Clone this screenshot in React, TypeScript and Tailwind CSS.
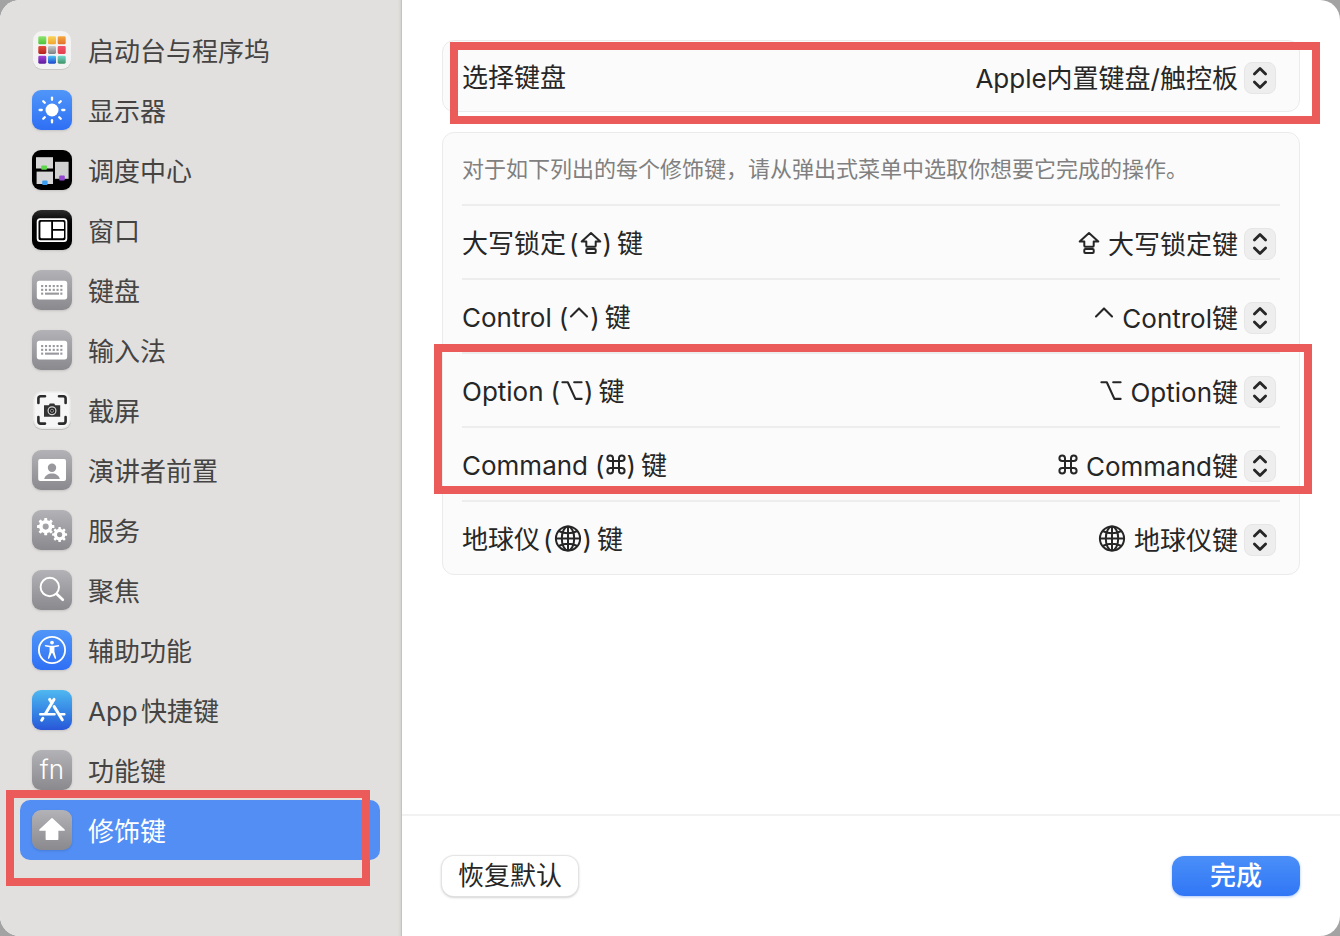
import { ReactNode, useId, useState } from "react";

const Launchpad = () => {
  const colors = [
    ["#8fe36e", "#4cc43a"],
    ["#fbd35a", "#f0a52e"],
    ["#f6a83f", "#e0702c"],
    ["#e8503f", "#b3231c"],
    ["#c9cccd", "#7d8183"],
    ["#f2516c", "#e3414f"],
    ["#a746d6", "#5b1a9c"],
    ["#4cc4f4", "#1f48cc"],
    ["#74d8cc", "#3f9468"]
  ];
  return (
    <svg viewBox="0 0 40 40" className="size-10">
      <defs>
        {colors.map(([from, to], i) => (
          <linearGradient key={i} id={`pad${i}`} x1="0" y1="0" x2="0" y2="1">
            <stop offset="0" stopColor={from} />
            <stop offset="1" stopColor={to} />
          </linearGradient>
        ))}
      </defs>
      <rect x="1" y="1.6" width="38" height="38.4" rx="9" fill="#c9c8c6" />
      <rect x="1" y="1" width="38" height="38" rx="9" fill="#f3f3f3" />
      {colors.map((_, i) => (
        <rect key={i} x={6.3 + (i % 3) * 9.7} y={6.3 + Math.floor(i / 3) * 9.7} width="8" height="8" rx="1.4" fill={`url(#pad${i})`} />
      ))}
    </svg>
  );
};

const Sun = () => (
  <svg viewBox="0 0 40 40" className="size-10" stroke="#fff" strokeWidth="2.3" strokeLinecap="round">
    <circle cx="20" cy="20" r="6.5" fill="#fff" stroke="none" />
    {[0, 45, 90, 135, 180, 225, 270, 315].map((a) => (
      <path key={a} d="M20 7.6v2.2" transform={`rotate(${a} 20 20)`} />
    ))}
  </svg>
);

const MissionControl = () => (
  <svg viewBox="0 0 40 40" className="size-10">
    <rect x="4" y="7.2" width="17" height="11.3" fill="#d6d6d6" />
    <rect x="4.6" y="21.6" width="16.4" height="12.4" fill="#d6d6d6" />
    <rect x="23" y="11.8" width="13.6" height="17" fill="#d0d0d0" />
    <rect x="9.2" y="15.4" width="5.8" height="4.4" rx="1" fill="#5fd74c" />
    <rect x="10.2" y="30.4" width="5.4" height="4.6" rx="1" fill="#3a9df2" />
    <rect x="27.2" y="25.4" width="5.6" height="5" rx="1" fill="#9448cf" />
  </svg>
);

const Windows = () => (
  <svg viewBox="0 0 40 40" className="size-10" fill="#fff">
    <rect x="5.6" y="9.2" width="28.8" height="22" rx="2.6" fill="none" stroke="#fff" strokeWidth="1.8" />
    <path d="M9.6 11.7h9.6v16.6H9.6a1.2 1.2 0 0 1-1.2-1.2V12.9a1.2 1.2 0 0 1 1.2-1.2ZM21 11.7h9.8a1.2 1.2 0 0 1 1.2 1.2V19H21ZM21 20.8h11v6.3a1.2 1.2 0 0 1-1.2 1.2H21Z" />
  </svg>
);

const Keyboard = () => (
  <svg viewBox="0 0 40 40" className="size-10" fill="#98989d">
    <rect x="4.8" y="10.8" width="30.4" height="18.6" rx="2.6" fill="#fff" />
    {[10, 13.9, 17.7, 21.6, 25.4, 29.2].map((x) => (
      <g key={x}>
        <rect x={x - 0.9} y="15" width="2.1" height="2.1" />
        <rect x={x - 0.9} y="18.8" width="2.1" height="2.1" />
      </g>
    ))}
    <rect x="9.1" y="22.6" width="2.1" height="2.1" />
    <rect x="13" y="22.6" width="14" height="2.1" />
    <rect x="28.3" y="22.6" width="2.1" height="2.1" />
  </svg>
);

const Screenshot = () => (
  <svg viewBox="0 0 40 40" className="size-10">
    <rect x="1" y="2" width="38" height="38" rx="9" fill="#bdbcba" />
    <rect x="1" y="1" width="38" height="38" rx="9" fill="#e9e9e8" />
    <rect x="2.6" y="2.4" width="34.8" height="35" rx="7.6" fill="#f6f6f6" />
    <path d="M6.4 13V8.6a2.4 2.4 0 0 1 2.4-2.4H13M27 6.2h4.2a2.4 2.4 0 0 1 2.4 2.4V13M33.6 27v4.2a2.4 2.4 0 0 1-2.4 2.4H27M13 33.6H8.8a2.4 2.4 0 0 1-2.4-2.4V27" fill="none" stroke="#2b2b2b" strokeWidth="2.6" strokeLinecap="round" />
    <path d="M12 15.2h4.8l1-1.7h4.4l1 1.7h5v11.6H12Z" fill="#333" />
    <circle cx="20" cy="20.8" r="3.9" fill="#222" stroke="#d8d8d8" strokeWidth="1.2" />
    <circle cx="20" cy="20.8" r="1.6" fill="none" stroke="#9a9a9a" strokeWidth=".9" />
  </svg>
);

const Presenter = () => (
  <svg viewBox="0 0 40 40" className="size-10" fill="#98989d">
    <rect x="6.2" y="9.1" width="27.8" height="21.8" rx="2" fill="#fff" />
    <circle cx="20" cy="17.7" r="4.2" />
    <path d="M12.2 29c.8-3.4 4-5.4 7.8-5.4s7 2 7.8 5.4Z" />
  </svg>
);

const Gear = ({ x, y, r }: { x: number; y: number; r: number }) => (
  <g transform={`translate(${x} ${y})`}>
    <circle r={r * 0.56} fill="none" stroke="#fff" strokeWidth={r * 0.42} />
    {[0, 45, 90, 135, 180, 225, 270, 315].map((a) => (
      <rect key={a} x={-r * 0.17} y={-r} width={r * 0.34} height={r * 0.4} rx=".6" fill="#fff" transform={`rotate(${a})`} />
    ))}
  </g>
);

const Services = () => (
  <svg viewBox="0 0 40 40" className="size-10">
    <Gear x={13.7} y={16.6} r={8.7} />
    <Gear x={27.6} y={24.6} r={7.5} />
  </svg>
);

const Spotlight = () => (
  <svg viewBox="0 0 40 40" className="size-10" fill="none" stroke="#fff" strokeLinecap="round">
    <circle cx="17.8" cy="17" r="9.2" strokeWidth="1.9" />
    <path d="m25 24.2 5.8 5.6" strokeWidth="2.7" />
  </svg>
);

const Accessibility = () => (
  <svg viewBox="0 0 40 40" className="size-10" fill="#fff">
    <circle cx="20" cy="20" r="13.1" fill="none" stroke="#fff" strokeWidth="1.8" />
    <circle cx="20" cy="12.6" r="1.9" />
    <path d="M13.6 15.1 18 15.7h4l4.4-.6c.9-.1 1.1 1.1.2 1.3l-4.2.9v4.2l1.7 6.4c.2.9-1 1.3-1.4.4L20.3 23h-.6l-2.4 5.3c-.4.9-1.6.5-1.4-.4l1.7-6.4v-4.2l-4.2-.9c-.9-.2-.7-1.4.2-1.3Z" />
  </svg>
);

const AppStore = () => (
  <svg viewBox="0 0 40 40" className="size-10" fill="none" stroke="#fff" strokeLinecap="round">
    <path d="M8.2 24.3h14.4M27.4 24.3h5" strokeWidth="2.4" />
    <path d="M22 9.4 13.6 23.4M17.6 9.4 20 13.2M22.2 16.6 30.3 29.8M10.9 28.3l-1.2 1.9" strokeWidth="3" />
  </svg>
);

const ShiftArrow = () => (
  <svg viewBox="0 0 40 40" className="size-10" fill="#fff" stroke="#fff" strokeWidth="1.6" strokeLinejoin="round">
    <path d="M20 8.9 32.1 20H25.6v9.2H14.4V20H7.9Z" />
  </svg>
);

const CapsGlyph = () => (
  <svg viewBox="0 0 22 28" className="h-7 w-[22px] shrink-0" fill="none" stroke="currentColor" strokeWidth="2" strokeLinejoin="round">
    <path d="M11 5.1 1.7 13.6h4.6v4.2q0 .9.9.9h7.6q.9 0 .9-.9v-4.2h4.6Z" />
    <rect x="6.3" y="20.9" width="9.4" height="4.1" rx="1" />
  </svg>
);

const ControlGlyph = () => (
  <svg viewBox="0 0 20 28" className="h-7 w-5 shrink-0" fill="none" stroke="currentColor" strokeWidth="2.1" strokeLinecap="round" strokeLinejoin="round">
    <path d="m2 14.4 8-8 8 8" />
  </svg>
);

const OptionGlyph = () => (
  <svg viewBox="0 0 22 28" className="h-7 w-[22px] shrink-0" fill="none" stroke="currentColor" strokeWidth="2.1" strokeLinecap="round" strokeLinejoin="round">
    <path d="M1.4 6.3h5.4l7.6 16.6h6.2M13.2 6.3h7.4" />
  </svg>
);

const CommandGlyph = () => (
  <svg viewBox="0 0 20 28" className="h-7 w-5 shrink-0" fill="none" stroke="currentColor" strokeWidth="2">
    <path d="M7 11.1v6.8M13 11.1v6.8M7 11.1h6M7 17.9h6M7 11.1H4.2A2.8 2.8 0 1 1 7 8.3ZM13 11.1V8.3a2.8 2.8 0 1 1 2.8 2.8ZM7 17.9v2.8a2.8 2.8 0 1 1-2.8-2.8ZM13 17.9h2.8a2.8 2.8 0 1 1-2.8 2.8Z" />
  </svg>
);

const GlobeGlyph = () => (
  <svg viewBox="0 0 28 28" className="size-7 shrink-0" fill="none" stroke="currentColor" strokeWidth="2">
    <circle cx="14" cy="14.5" r="12.1" />
    <ellipse cx="14" cy="14.5" rx="6.2" ry="12.1" />
    <path d="M14 2.3v24.4M1.8 14.5h24.4M4.6 7q9.4 4.6 18.8 0M4.6 22q9.4-4.6 18.8 0" />
  </svg>
);

const GRAY = "bg-linear-to-b from-[#b3b3b7] to-[#89898e] shadow-sm";
const BLUE = "bg-linear-to-b from-[#5096f8] to-[#2f6ff4] shadow-sm";

const NAV_ITEMS: { label: string; tile: string; icon: ReactNode }[] = [
  { label: "启动台与程序坞", tile: "", icon: <Launchpad /> },
  { label: "显示器", tile: BLUE, icon: <Sun /> },
  { label: "调度中心", tile: "bg-black shadow-sm", icon: <MissionControl /> },
  { label: "窗口", tile: "bg-linear-to-b from-[#2e2e2e] to-black to-50% shadow-sm", icon: <Windows /> },
  { label: "键盘", tile: GRAY, icon: <Keyboard /> },
  { label: "输入法", tile: GRAY, icon: <Keyboard /> },
  { label: "截屏", tile: "", icon: <Screenshot /> },
  { label: "演讲者前置", tile: GRAY, icon: <Presenter /> },
  { label: "服务", tile: GRAY, icon: <Services /> },
  { label: "聚焦", tile: GRAY, icon: <Spotlight /> },
  { label: "辅助功能", tile: BLUE, icon: <Accessibility /> },
  { label: "App快捷键", tile: "bg-linear-to-b from-[#50b8f0] to-[#2a56d8] shadow-sm", icon: <AppStore /> },
  { label: "功能键", tile: GRAY, icon: <span className="text-[26px] leading-none font-light text-white">fn</span> },
  { label: "修饰键", tile: GRAY, icon: <ShiftArrow /> }
];

const KEY_NAMES = ["大写锁定键", "Control键", "Option键", "Command键", "地球仪键", "无操作"];

// Highlight frame drawn over the content
const Marker = ({ className }: { className: string }) => (
  <div className={`pointer-events-none absolute z-10 border-8 border-[#ea5b5a] ${className}`} />
);

interface PopupProps {
  id: string;
  options: string[];
  initial: string;
}

function Popup({ id, options, initial }: PopupProps) {
  const [value, setValue] = useState(initial);

  return (
    <span className="relative flex h-9 items-center">
      <select
        id={id}
        value={value}
        onChange={(e) => setValue(e.target.value)}
        className="field-sizing-content h-9 appearance-none bg-transparent pt-[3px] pr-[38px] text-right"
      >
        {options.map((o) => (
          <option key={o}>{o}</option>
        ))}
      </select>
      <span className="pointer-events-none absolute right-0 bottom-0 size-8 rounded-lg border border-[#e6e6e6] bg-[#eeeeee]">
        <svg viewBox="1 1 30 30" className="size-full" fill="none" stroke="currentColor" strokeWidth="2.8" strokeLinecap="round" strokeLinejoin="round">
          <path d="m10.4 12 5.6-5.6 5.6 5.6M10.4 20l5.6 5.6 5.6-5.6" />
        </svg>
      </span>
    </span>
  );
}

interface KeyRowProps {
  name: string;
  glyph: ReactNode;
  value: string;
}

function KeyRow({ name, glyph, value }: KeyRowProps) {
  const id = useId();
  const latin = /^[A-Z]/.test(name);

  return (
    <div className="flex h-[74px] items-center justify-between border-t-2 border-[#ededed] pr-1">
      <label htmlFor={id} className="flex items-center gap-px">
        <span className="pt-[3px]">{name}</span>
        <span className={`pt-[3px] ${latin ? "ml-1.5" : "ml-0.5"}`}>(</span>
        {glyph}
        <span className="pt-[3px]">)</span>
        <span className="ml-1 pt-[3px]">键</span>
      </label>
      <div className="flex items-center gap-2">
        {glyph}
        <Popup id={id} options={KEY_NAMES} initial={value} />
      </div>
    </div>
  );
}

export default function App() {
  const [active, setActive] = useState("修饰键");

  return (
    <div className="min-h-screen bg-[#a3a3a3] font-['Inter','Noto_Sans_CJK_SC',sans-serif] text-[26px] leading-9 text-[#262626]">
      <div className="flex min-h-screen overflow-hidden rounded-[20px] bg-white">
        <nav className="w-[402px] shrink-0 border-r border-[#c4c3c2] bg-[#e1e0de] py-5 pr-[21px] pl-5 shadow-[inset_-3px_0_3px_-2px_#d0cfcd]">
          {NAV_ITEMS.map(({ label, tile, icon }) => (
            <div key={label} className="relative">
              <button
                onClick={() => setActive(label)}
                className={`flex h-15 w-full items-center gap-4 rounded-[10px] px-3 text-left [text-autospace:normal] ${
                  active === label ? "bg-[#528ef4] text-white" : "text-[#454443]"
                }`}
              >
                <span className={`flex size-10 items-center justify-center rounded-[9px] ${tile}`}>{icon}</span>
                <span className="pt-[3px]">{label}</span>
              </button>
              {label === "修饰键" && <Marker className="-top-2.5 right-2.5 -bottom-6.5 -left-3.5" />}
            </div>
          ))}
        </nav>

        <div className="flex min-w-0 flex-1 flex-col">
          <main className="flex flex-1 flex-col gap-5 p-10">
            <section className="relative flex h-[72px] items-center justify-between rounded-xl border border-[#ebebeb] bg-[#fbfbfb] pr-[23px] pl-[19px]">
              <label htmlFor="keyboard" className="pt-[3px]">
                选择键盘
              </label>
              <Popup id="keyboard" options={["Apple内置键盘/触控板"]} initial="Apple内置键盘/触控板" />
              <Marker className="top-px -right-[21px] -bottom-[13px] left-[7px]" />
            </section>

            <section className="rounded-xl border border-[#ebebeb] bg-[#fbfbfb] px-[19px]">
              <p className="flex h-[71px] items-center text-[22px] text-[#808080]">
                对于如下列出的每个修饰键，请从弹出式菜单中选取你想要它完成的操作。
              </p>
              <KeyRow name="大写锁定" glyph={<CapsGlyph />} value="大写锁定键" />
              <KeyRow name="Control" glyph={<ControlGlyph />} value="Control键" />
              <div className="relative">
                <KeyRow name="Option" glyph={<OptionGlyph />} value="Option键" />
                <KeyRow name="Command" glyph={<CommandGlyph />} value="Command键" />
                <Marker className="-top-2 -right-8 bottom-1.5 -left-7" />
              </div>
              <KeyRow name="地球仪" glyph={<GlobeGlyph />} value="地球仪键" />
            </section>
          </main>

          <footer className="flex items-center justify-between border-t-2 border-[#f2f2f2] px-10 py-10">
            <button className="h-10 rounded-xl bg-white px-4 shadow-[0_0_1px_1px_#e4e4e4,0_1px_3px_#a8a8a8]">恢复默认</button>
            <button className="h-10 w-32 rounded-xl bg-linear-to-b from-[#4a8ff8] to-[#3176f5] font-medium text-white shadow-[0_1px_3px_#a9c6fa]">
              完成
            </button>
          </footer>
        </div>
      </div>
    </div>
  );
}
